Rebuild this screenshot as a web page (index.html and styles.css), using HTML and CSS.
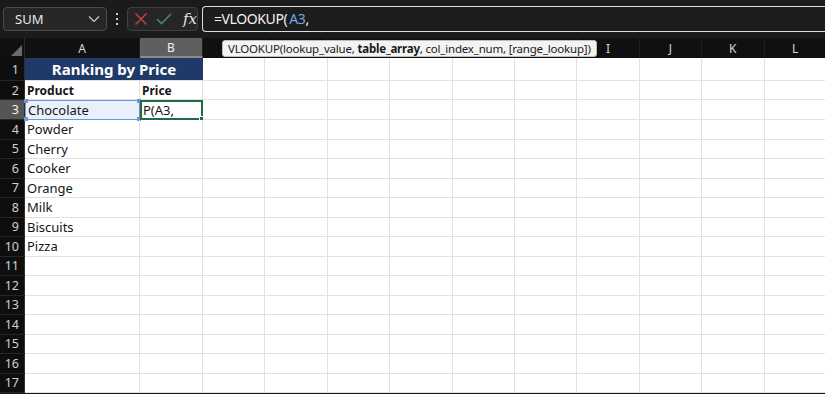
FILE: index.html
```html
<!DOCTYPE html>
<html>
<head>
<meta charset="utf-8">
<link rel="stylesheet" href="styles.css">
</head>
<body>
<div class="app">
  <div class="toolbar">
    <div class="namebox">
      <span>SUM</span>
      <svg class="chev" width="12" height="8" viewBox="0 0 12 8"><path d="M1 1.5 L6 6.5 L11 1.5" fill="none" stroke="#cfcfcf" stroke-width="1.2"/></svg>
    </div>
    <div class="vdots"><i></i><i></i><i></i></div>
    <div class="fbtns">
      <svg width="14" height="14" viewBox="0 0 14 14"><path d="M1.5 1.5 L12.5 12.5 M12.5 1.5 L1.5 12.5" stroke="#b8443e" stroke-width="1.6" fill="none"/></svg>
      <svg width="16" height="12" viewBox="0 0 16 12"><path d="M1 6 L5.5 10.5 L15 1" stroke="#3f8f5c" stroke-width="1.6" fill="none"/></svg>
      <span class="fx">fx</span>
    </div>
    <div class="fbar">=VLOOKUP(<span class="ref">A3</span>,</div>
  </div>

  <div class="sheet">
    <div class="tip">VLOOKUP(lookup_value, <b>table_array</b>, col_index_num, [range_lookup])</div>

    <div class="ch corner"><span class="tri"></span></div>
    <div class="ch">A</div><div class="ch sel">B</div><div class="ch"></div><div class="ch"></div><div class="ch"></div><div class="ch"></div><div class="ch"></div><div class="ch"></div><div class="ch">I</div><div class="ch">J</div><div class="ch">K</div><div class="ch">L</div>

    <div class="rh">1</div><div class="title">Ranking by Price</div><div class="c"></div><div class="c"></div><div class="c"></div><div class="c"></div><div class="c"></div><div class="c"></div><div class="c"></div><div class="c"></div><div class="c"></div><div class="c"></div>

    <div class="rh">2</div><div class="c hd">Product</div><div class="c hd">Price</div><div class="c"></div><div class="c"></div><div class="c"></div><div class="c"></div><div class="c"></div><div class="c"></div><div class="c"></div><div class="c"></div><div class="c"></div><div class="c"></div>

    <div class="rh sel">3</div><div class="c refsel">Chocolate<i class="h tl"></i><i class="h tr"></i><i class="h bl"></i><i class="h br"></i></div><div class="c edit">P(A3,<i class="gh"></i></div><div class="c"></div><div class="c"></div><div class="c"></div><div class="c"></div><div class="c"></div><div class="c"></div><div class="c"></div><div class="c"></div><div class="c"></div><div class="c"></div>

    <div class="rh">4</div><div class="c">Powder</div><div class="c"></div><div class="c"></div><div class="c"></div><div class="c"></div><div class="c"></div><div class="c"></div><div class="c"></div><div class="c"></div><div class="c"></div><div class="c"></div><div class="c"></div>

    <div class="rh">5</div><div class="c">Cherry</div><div class="c"></div><div class="c"></div><div class="c"></div><div class="c"></div><div class="c"></div><div class="c"></div><div class="c"></div><div class="c"></div><div class="c"></div><div class="c"></div><div class="c"></div>

    <div class="rh">6</div><div class="c">Cooker</div><div class="c"></div><div class="c"></div><div class="c"></div><div class="c"></div><div class="c"></div><div class="c"></div><div class="c"></div><div class="c"></div><div class="c"></div><div class="c"></div><div class="c"></div>

    <div class="rh">7</div><div class="c">Orange</div><div class="c"></div><div class="c"></div><div class="c"></div><div class="c"></div><div class="c"></div><div class="c"></div><div class="c"></div><div class="c"></div><div class="c"></div><div class="c"></div><div class="c"></div>

    <div class="rh">8</div><div class="c">Milk</div><div class="c"></div><div class="c"></div><div class="c"></div><div class="c"></div><div class="c"></div><div class="c"></div><div class="c"></div><div class="c"></div><div class="c"></div><div class="c"></div><div class="c"></div>

    <div class="rh">9</div><div class="c">Biscuits</div><div class="c"></div><div class="c"></div><div class="c"></div><div class="c"></div><div class="c"></div><div class="c"></div><div class="c"></div><div class="c"></div><div class="c"></div><div class="c"></div><div class="c"></div>

    <div class="rh">10</div><div class="c">Pizza</div><div class="c"></div><div class="c"></div><div class="c"></div><div class="c"></div><div class="c"></div><div class="c"></div><div class="c"></div><div class="c"></div><div class="c"></div><div class="c"></div><div class="c"></div>

    <div class="rh">11</div><div class="c"></div><div class="c"></div><div class="c"></div><div class="c"></div><div class="c"></div><div class="c"></div><div class="c"></div><div class="c"></div><div class="c"></div><div class="c"></div><div class="c"></div><div class="c"></div>

    <div class="rh">12</div><div class="c"></div><div class="c"></div><div class="c"></div><div class="c"></div><div class="c"></div><div class="c"></div><div class="c"></div><div class="c"></div><div class="c"></div><div class="c"></div><div class="c"></div><div class="c"></div>

    <div class="rh">13</div><div class="c"></div><div class="c"></div><div class="c"></div><div class="c"></div><div class="c"></div><div class="c"></div><div class="c"></div><div class="c"></div><div class="c"></div><div class="c"></div><div class="c"></div><div class="c"></div>

    <div class="rh">14</div><div class="c"></div><div class="c"></div><div class="c"></div><div class="c"></div><div class="c"></div><div class="c"></div><div class="c"></div><div class="c"></div><div class="c"></div><div class="c"></div><div class="c"></div><div class="c"></div>

    <div class="rh">15</div><div class="c"></div><div class="c"></div><div class="c"></div><div class="c"></div><div class="c"></div><div class="c"></div><div class="c"></div><div class="c"></div><div class="c"></div><div class="c"></div><div class="c"></div><div class="c"></div>

    <div class="rh">16</div><div class="c"></div><div class="c"></div><div class="c"></div><div class="c"></div><div class="c"></div><div class="c"></div><div class="c"></div><div class="c"></div><div class="c"></div><div class="c"></div><div class="c"></div><div class="c"></div>

    <div class="rh">17</div><div class="c"></div><div class="c"></div><div class="c"></div><div class="c"></div><div class="c"></div><div class="c"></div><div class="c"></div><div class="c"></div><div class="c"></div><div class="c"></div><div class="c"></div><div class="c"></div>
  </div>
</div>
</body>
</html>
```

FILE: styles.css
```css
* { box-sizing: border-box; }
html, body {
  margin: 0;
  padding: 0;
  background: #161616;
  overflow: hidden;
}
body {
  font-family: "Noto Sans", "Open Sans", sans-serif;
}
.app {
  width: 825px;
  height: 394px;
  overflow: hidden;
  display: flex;
  flex-direction: column;
}

/* toolbar */
.toolbar {
  height: 38px;
  flex: none;
  display: flex;
  align-items: center;
  padding-left: 3px;
  background: #1b1b1b;
}
.namebox {
  width: 104px;
  height: 24px;
  border: 1px solid #4b4b4b;
  border-radius: 4px;
  background: #262626;
  display: flex;
  align-items: center;
  justify-content: space-between;
  padding: 0 6px 0 11px;
  color: #e8e8e8;
  font-size: 13px;
}
.vdots {
  width: 20px;
  display: flex;
  flex-direction: column;
  align-items: center;
  gap: 3px;
}
.vdots i {
  width: 2px;
  height: 2px;
  background: #cfcfcf;
  display: block;
}
.fbtns {
  width: 71px;
  height: 24px;
  border: 1px solid #3f3f3f;
  border-radius: 4px;
  background: #262626;
  display: flex;
  align-items: center;
  gap: 8px;
  padding-left: 6px;
}
.fx {
  font-family: "DejaVu Serif", "Liberation Serif", serif;
  font-style: italic;
  color: #e6e6e6;
  font-size: 15px;
  margin-left: 3px;
}
.fbar {
  margin-left: 4px;
  flex: 1;
  height: 26px;
  border: 1.5px solid #dcdcdc;
  border-right: none;
  border-radius: 4px 0 0 4px;
  background: #1d1d1d;
  color: #f2f2f2;
  font-size: 14px;
  line-height: 23px;
  padding-left: 11px;
  letter-spacing: -0.4px;
}
.fbar .ref { color: #6ea8e0; margin-left: 2px; }

/* sheet */
.sheet {
  position: relative;
  display: grid;
  grid-template-columns: 25px 115px 63px repeat(10, 62.4px);
  grid-template-rows: 20px 23px 19px 20px repeat(14, 19.5px);
  background: #fff;
}
.ch {
  background: #101010;
  color: #d6d6d6;
  font-size: 12px;
  display: flex;
  align-items: center;
  justify-content: center;
  border-right: 1px solid #1e1e1e;
}
.ch.sel {
  background: #5f5f5f;
  color: #f0f0f0;
  border-bottom: 2px solid #8a8a8a;
}
.corner {
  position: relative;
  background: #101010;
  border-right: 1px solid #2a2a2a;
}
.tri {
  position: absolute;
  right: 2px;
  bottom: 2px;
  width: 0;
  height: 0;
  border-left: 11px solid transparent;
  border-bottom: 11px solid #6a6a6a;
}
.rh {
  background: #0e0e0e;
  color: #d0d0d0;
  font-size: 12.5px;
  display: flex;
  align-items: center;
  justify-content: flex-end;
  padding-right: 5px;
  border-bottom: 1px solid #262626;
  border-right: 1px solid #303030;
}
.rh.sel {
  background: #555;
  color: #f2f2f2;
}
.c {
  position: relative;
  border-right: 1px solid #e1e1e1;
  border-bottom: 1px solid #e1e1e1;
  font-size: 13px;
  color: #161616;
  padding-left: 2px;
  display: flex;
  align-items: center;
  white-space: nowrap;
}
.c.hd {
  font-weight: 700;
  font-size: 12px;
}
.title {
  grid-column: span 2;
  background: #1f3a68;
  color: #fff;
  font-weight: 700;
  font-size: 15px;
  display: flex;
  align-items: center;
  justify-content: center;
  border-bottom: 1px solid #e1e1e1;
}
.refsel {
  background: #e9f0fb;
  border: 1px solid #6f95d6;
}
.refsel .h {
  position: absolute;
  width: 4px;
  height: 4px;
  background: #6f95d6;
}
.h.tl { left: -2px; top: -2px; }
.h.tr { right: -2px; top: -2px; }
.h.bl { left: -2px; bottom: -2px; }
.h.br { right: -2px; bottom: -2px; }
.edit {
  border: 2px solid #1f6b43;
  padding-left: 1px;
}
.edit .gh {
  position: absolute;
  right: -3px;
  bottom: -3px;
  width: 5px;
  height: 5px;
  background: #1f6b43;
  border: 1px solid #fff;
}

/* function tooltip */
.tip {
  position: absolute;
  left: 222px;
  top: 2px;
  height: 17px;
  padding: 0 5px;
  background: #f3f3f3;
  border: 1px solid #bdbdbd;
  border-radius: 3px;
  font-size: 11.5px;
  line-height: 15px;
  color: #1a1a1a;
  white-space: nowrap;
  z-index: 2;
  letter-spacing: -0.2px;
}
.tip b { font-weight: 700; }
```
